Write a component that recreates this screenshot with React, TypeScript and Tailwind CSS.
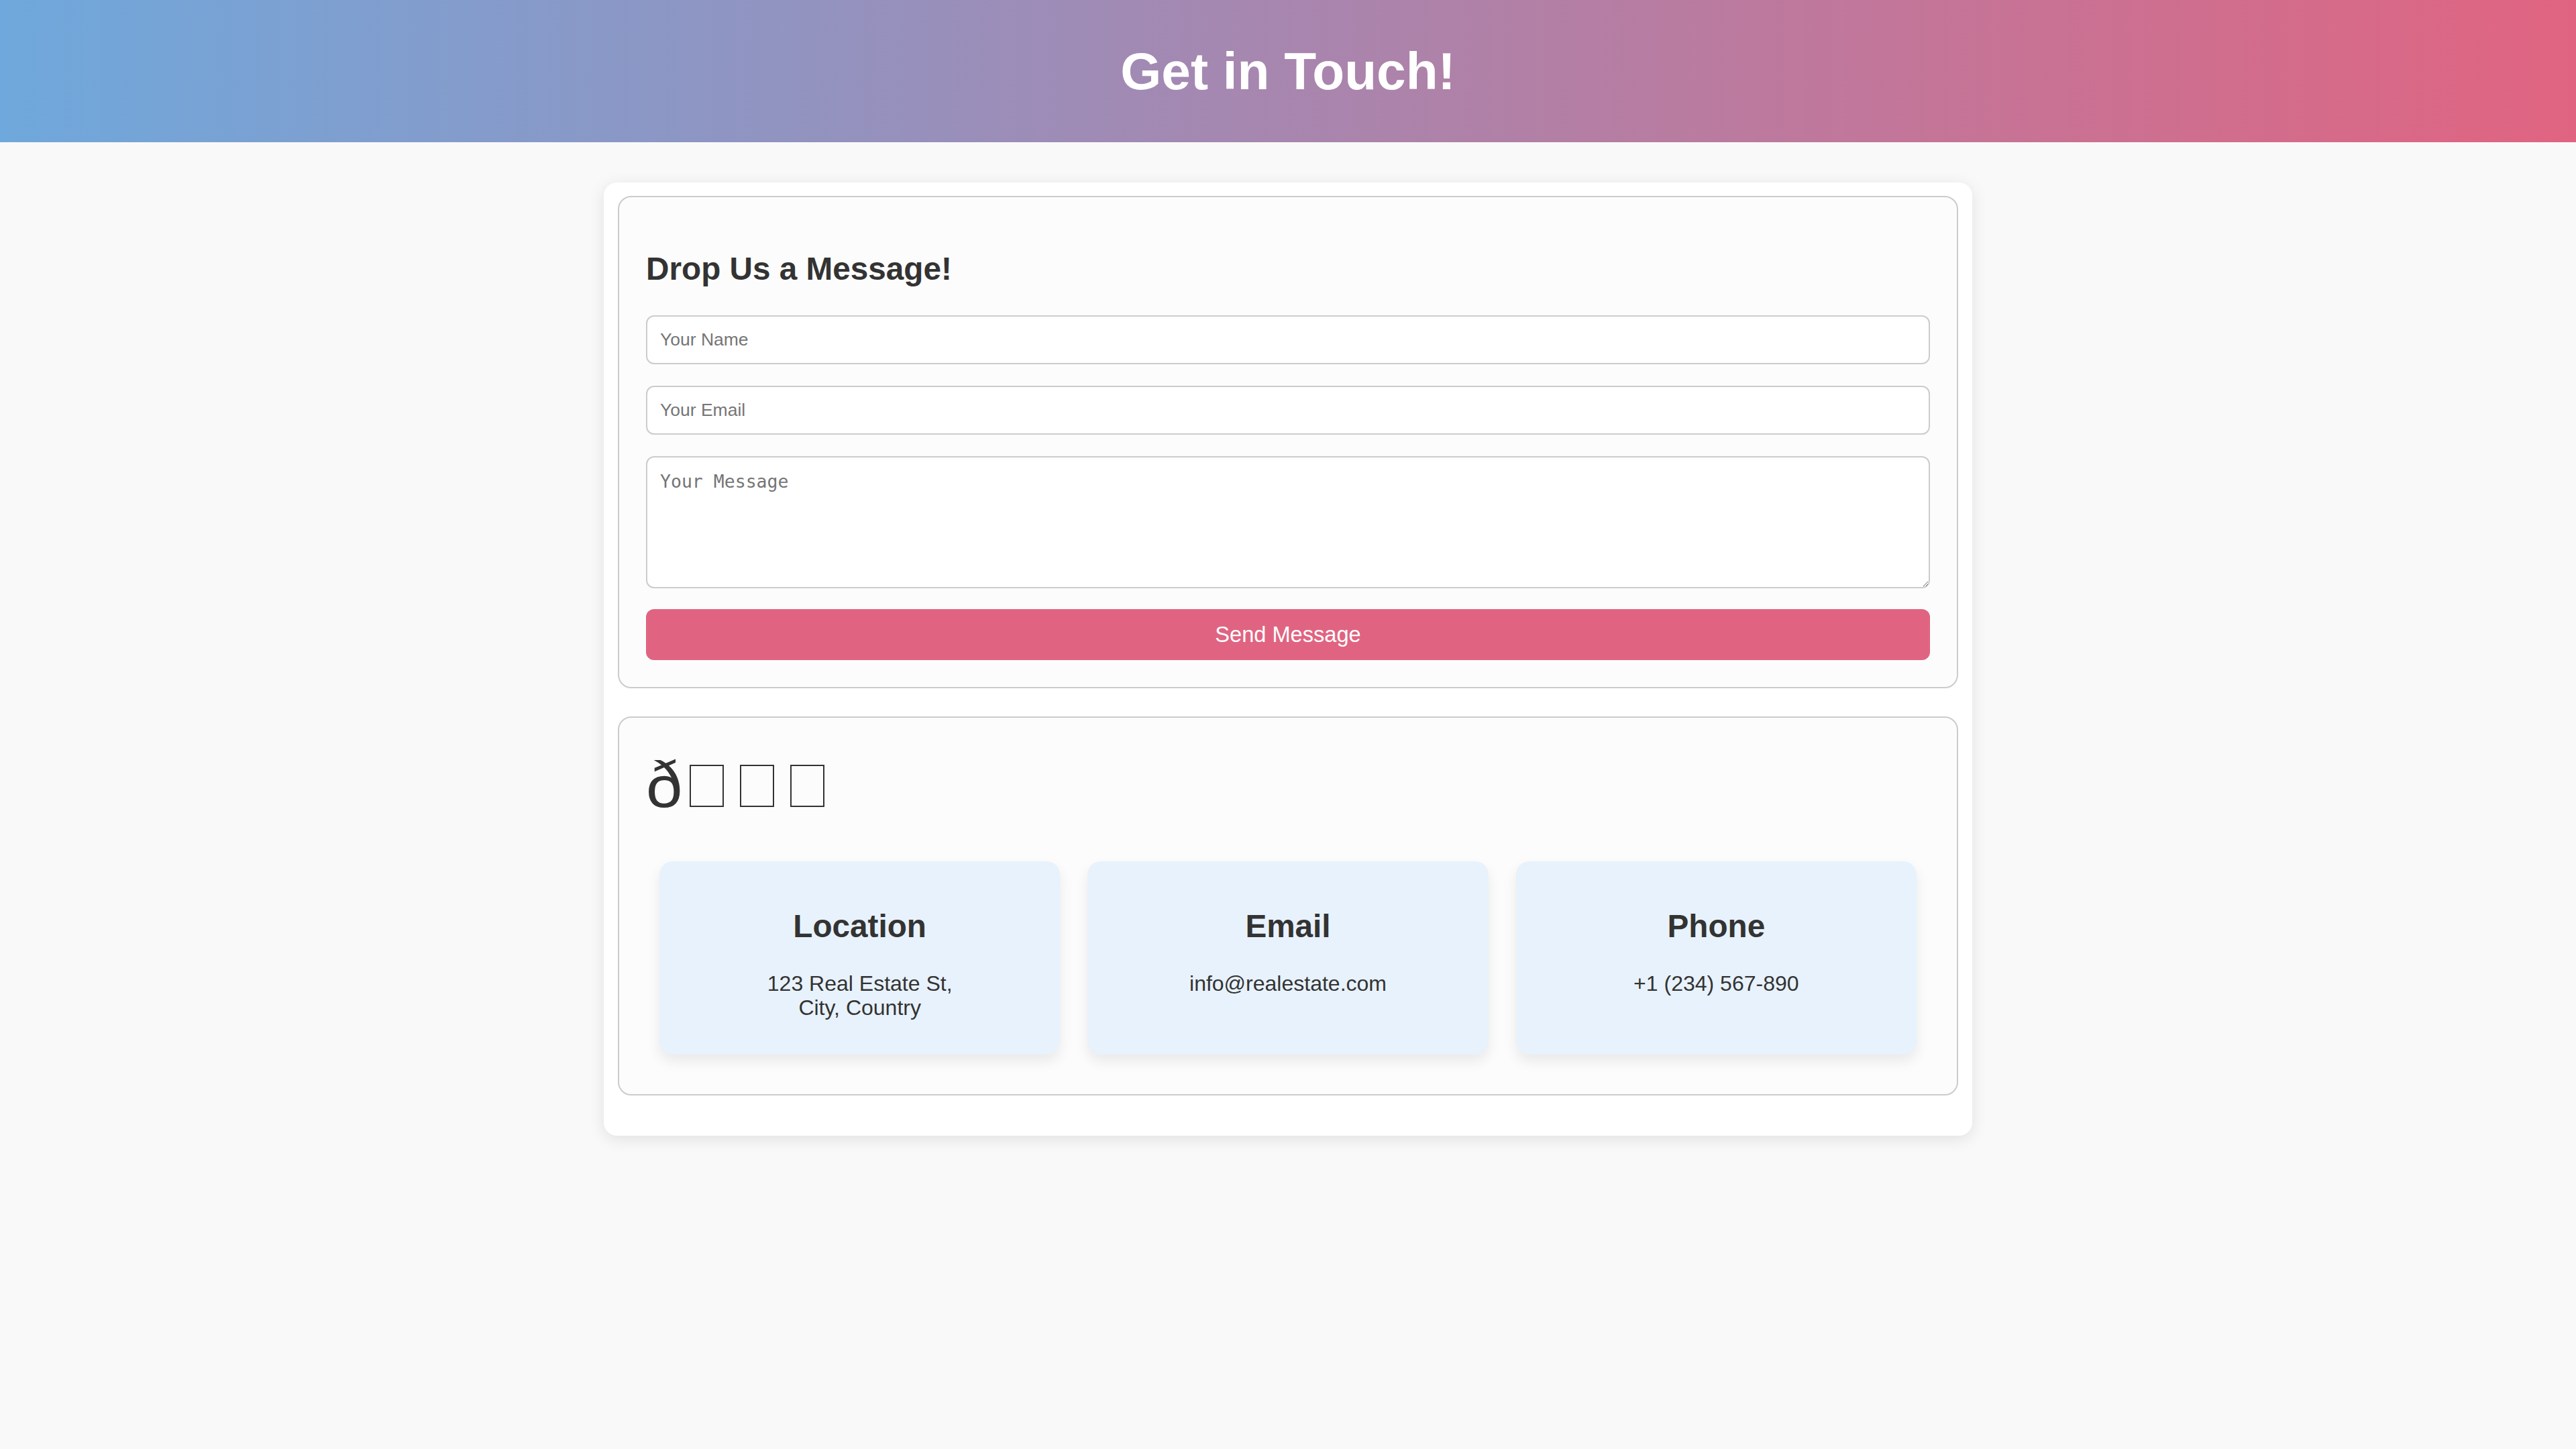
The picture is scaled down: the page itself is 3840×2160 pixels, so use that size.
import React from 'react';

const infos = [
  { title: 'Location', lines: ['123 Real Estate St,', 'City, Country'] },
  { title: 'Email', lines: ['info@realestate.com'] },
  { title: 'Phone', lines: ['+1 (234) 567-890'] },
];

function Tofu() {
  return <span className="inline-block w-[51px] h-[63px] ml-[11px] mr-[13px] border-2 border-[#333]" />;
}

export default function App() {
  return (
    <div className="min-h-screen bg-[#f9f9f9] font-['Liberation_Sans',Arial,sans-serif] text-[#333]">
      <header className="h-[212px] flex items-center justify-center bg-linear-to-r/srgb from-[#6fa8dc] to-[#e06481]">
        <h1 className="text-[78.4px] font-bold text-white leading-none">Get in Touch!</h1>
      </header>

      <main className="w-[2040px] mx-auto mt-[60px] bg-white rounded-[20px] shadow-[0_5px_25px_rgba(0,0,0,0.1)] px-[21px] pt-[20px] pb-[60px] flex flex-col gap-[42px]">
        {/* message form */}
        <section className="border-2 border-[#ccc] rounded-[20px] bg-[#fcfcfc] px-[40px] pt-[80px] pb-[40px]">
          <h2 className="text-[47.7px] font-bold leading-[53px] mb-[43px]">Drop Us a Message!</h2>
          <form className="flex flex-col" onSubmit={(e) => e.preventDefault()}>
            <input
              type="text"
              placeholder="Your Name"
              className="w-full h-[73px] border-2 border-[#ccc] rounded-[12px] bg-white px-[19px] text-[26.5px] placeholder:text-[#757575] outline-none"
            />
            <input
              type="email"
              placeholder="Your Email"
              className="w-full h-[73px] mt-[32px] border-2 border-[#ccc] rounded-[12px] bg-white px-[19px] text-[26.5px] placeholder:text-[#757575] outline-none"
            />
            <textarea
              placeholder="Your Message"
              className="w-full h-[197px] mt-[32px] border-2 border-[#ccc] rounded-[12px] bg-white px-[19px] py-[20px] font-['DejaVu_Sans_Mono',monospace] text-[26.5px] leading-[31px] placeholder:text-[#757575] outline-none resize"
            />
            <button
              type="submit"
              className="w-full h-[76px] mt-[31px] bg-[#e06481] text-white text-[32.6px] rounded-[12px]"
            >
              Send Message
            </button>
          </form>
        </section>

        {/* contact info */}
        <section className="border-2 border-[#ccc] rounded-[20px] bg-[#fcfcfc] px-[40px] pt-[44px] pb-[59px]">
          <h2 className="text-[97px] leading-[111px] font-normal">
            ð<Tofu /><Tofu /><Tofu />
          </h2>
          <div className="flex gap-[41px] px-[20px] mt-[59px]">
            {infos.map((info) => (
              <div
                key={info.title}
                className="flex-1 bg-[#e8f2fc] rounded-[20px] shadow-[0_10px_20px_rgba(0,0,0,0.08)] text-center pt-[70px] pb-[52px] px-[20px]"
              >
                <h3 className="text-[47.7px] font-bold leading-[53px]">{info.title}</h3>
                <p className="text-[32px] leading-[36px] mt-[41px]">
                  {info.lines.map((l, i) => (
                    <React.Fragment key={i}>
                      {i > 0 && <br />}
                      {l}
                    </React.Fragment>
                  ))}
                </p>
              </div>
            ))}
          </div>
        </section>
      </main>
    </div>
  );
}
